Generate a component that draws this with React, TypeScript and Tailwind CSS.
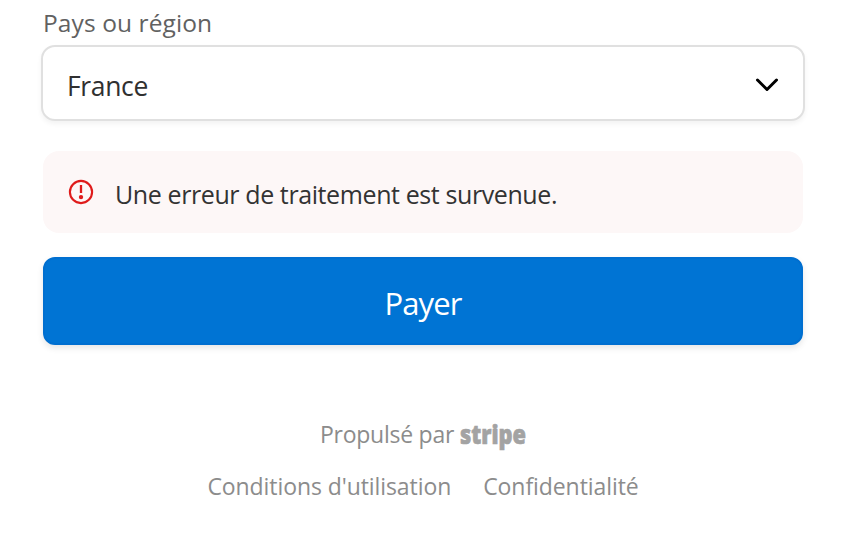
import React from 'react';

const ErrorIcon: React.FC = () => (
  <svg className="w-[26px] h-[26px] shrink-0" viewBox="0 0 26 26" fill="none">
    <circle cx="13" cy="13" r="11.1" stroke="#df1b1b" strokeWidth="2.1" />
    <path d="M13 6v8" stroke="#df1b1b" strokeWidth="2.3" />
    <circle cx="13" cy="18.1" r="2.2" fill="#df1b1b" />
  </svg>
);

const CountrySelect: React.FC = () => (
  <button
    id="country"
    type="button"
    className="-mx-0.5 mt-1 flex h-[76px] items-center justify-between rounded-[14px] border-2 border-[#e0e0e0] bg-white pl-6 pr-6 text-left shadow-[0_3px_5px_rgba(0,0,0,0.05)]"
  >
    <span className="mt-[5px] text-[26.5px] leading-9 tracking-[-0.35px] text-[#303030]">France</span>
    <svg className="mt-1 w-6 h-4" viewBox="0 0 24 16" fill="none">
      <path d="M2.5 3 12 12.5 21.5 3" stroke="#000" strokeWidth="3" strokeLinecap="round" strokeLinejoin="round" />
    </svg>
  </button>
);

const Footer: React.FC = () => (
  <footer className="mt-[71px] flex flex-col items-center text-[23px] leading-9 text-[#8c8c8c]">
    <div className="flex items-center gap-[6px]">
      <span className="tracking-[-0.25px]">Propulsé par</span>
      <svg className="w-[66px] h-10 -my-0.5 overflow-visible" viewBox="0 0 66 40">
        <text
          x="0"
          y="30"
          textLength="66"
          lengthAdjust="spacingAndGlyphs"
          className="fill-[#a3a3a3] stroke-[#a3a3a3] text-[26px] leading-none font-extrabold"
          strokeWidth="0.7"
        >
          stripe
        </text>
      </svg>
    </div>
    <nav className="mt-4 flex gap-8 tracking-[-0.08px]">
      {["Conditions d'utilisation", 'Confidentialité'].map((item) => (
        <a key={item} href="#">
          {item}
        </a>
      ))}
    </nav>
  </footer>
);

const App: React.FC = () => {
  return (
    <main className="h-[560px] overflow-hidden bg-white pl-[43px] pr-[47px] pt-[5px] font-['Open_Sans','Noto_Sans',sans-serif]">
      <form className="flex flex-col" onSubmit={(e) => e.preventDefault()}>
        <label htmlFor="country" className="text-[24.5px] leading-9 tracking-[0.1px] text-[#616161]">
          Pays ou région
        </label>
        <CountrySelect />

        {/* Payment error */}
        <div role="alert" className="mt-[30px] flex h-[82px] items-center rounded-2xl bg-[#fdf7f7] pl-[25px]">
          <ErrorIcon />
          <span className="ml-[21px] mt-[3px] text-[25px] leading-9 tracking-[-0.4px] text-[#333]">
            Une erreur de traitement est survenue.
          </span>
        </div>

        <button
          type="submit"
          className="mt-6 h-[88px] rounded-xl border-2 border-[#006fd0] bg-[#0074d4] pt-1 text-[31px] leading-10 tracking-[-0.9px] text-white shadow-[0_3px_6px_rgba(0,0,0,0.1)]"
        >
          Payer
        </button>
      </form>
      <Footer />
    </main>
  );
};

export default App;
